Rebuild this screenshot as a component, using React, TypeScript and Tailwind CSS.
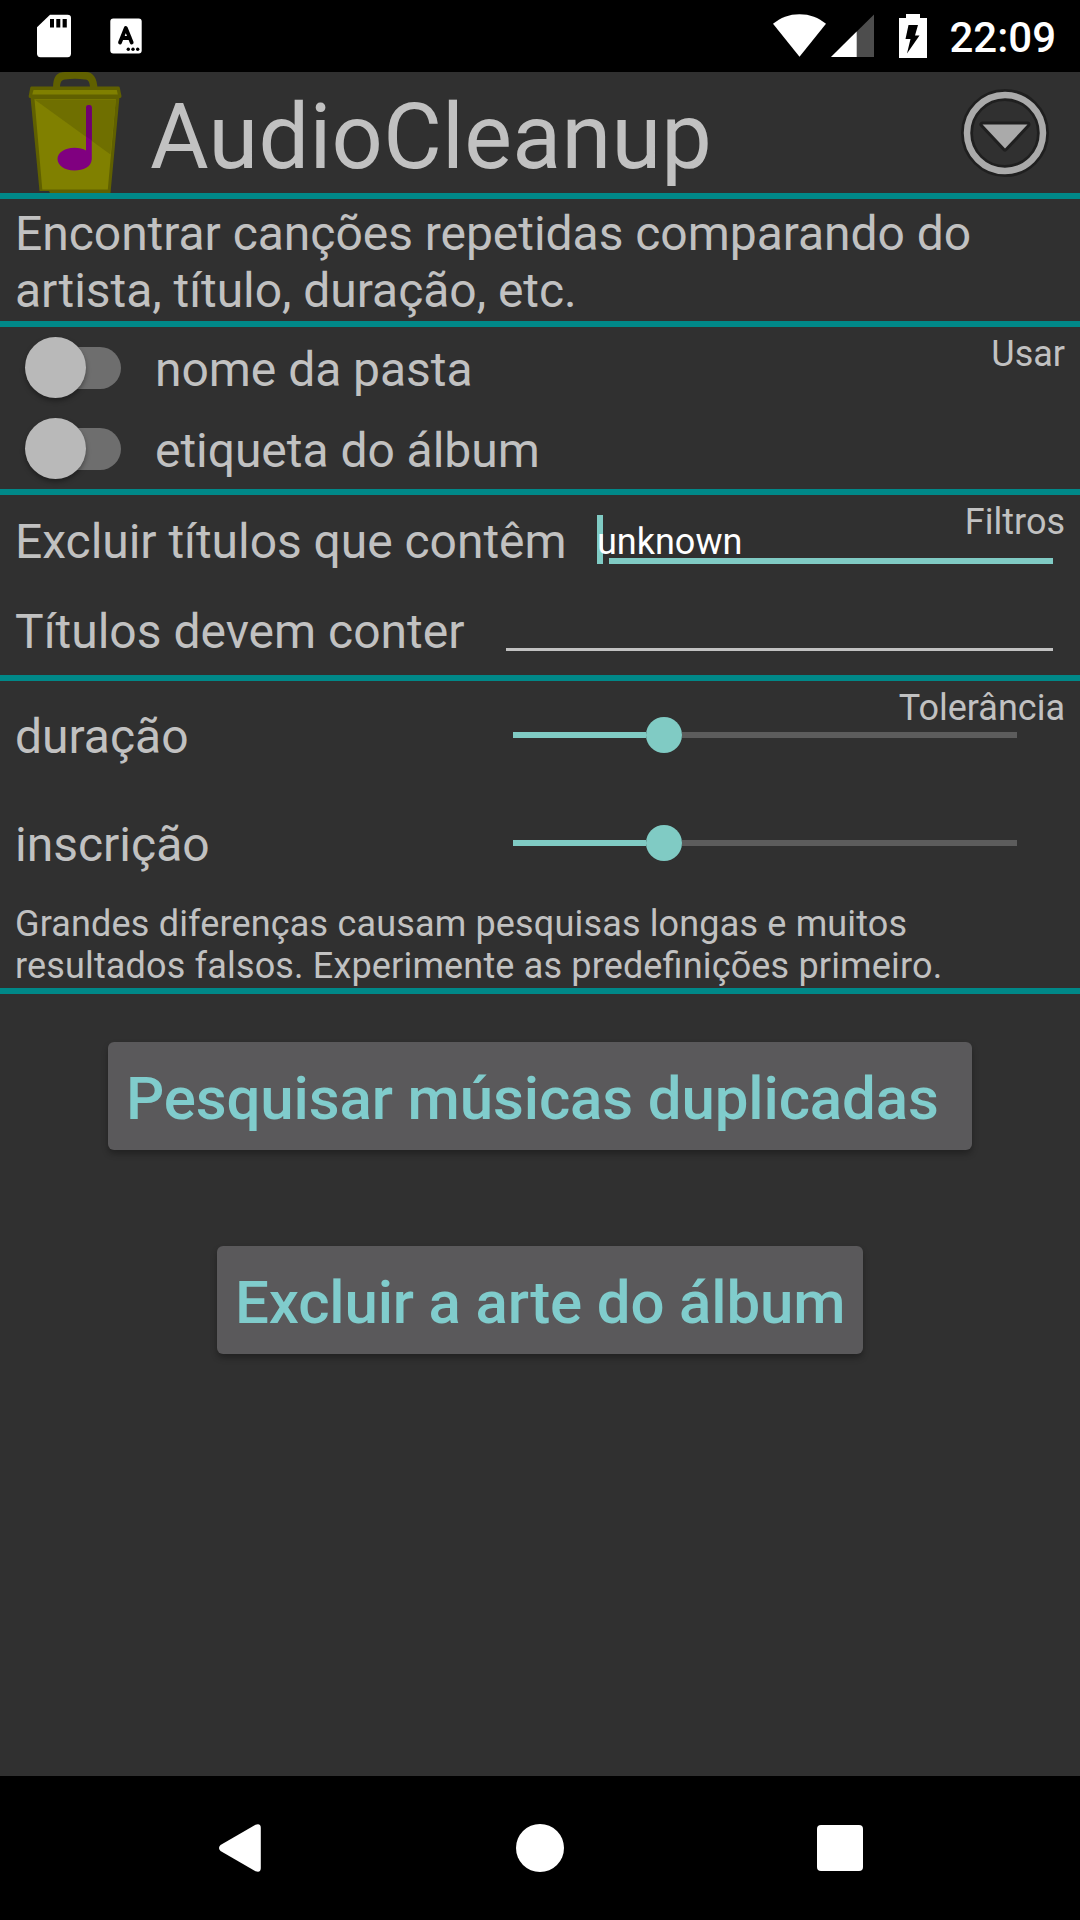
import type { ReactNode } from "react";

function StatusBar() {
  return (
    <div className="flex h-[72px] items-center justify-between bg-black pl-[37px] pr-[24px] text-white">
      <div className="flex items-center gap-[39px]">
        <svg className="h-[44px] w-[34px]" viewBox="0 0 34 44">
          <path d="M13 0.700H30.500Q34 0.700 34 4V39.500Q34 43.200 30.500 43.200H3.500Q0 43.200 0 39.500V13.300Z" fill="#fff" />
          <path d="M13 5h4v8.500h-4zM19.300 5h4v8.500h-4zM25.600 5h4.200v8.500h-4.200z" fill="#000" />
        </svg>
        <svg className="h-[36px] w-[32px]" viewBox="0 0 32 36">
          <rect x="0.300" y="0.500" width="31.400" height="35" rx="3" fill="#fff" />
          <path d="M10 24.500L15.800 10L21.700 24.500M12 20H20" fill="none" stroke="#000" strokeWidth="3.800" strokeLinecap="round" strokeLinejoin="round" />
          <circle cx="18.300" cy="31.300" r="1.700" fill="#000" />
          <circle cx="23" cy="31.300" r="1.700" fill="#000" />
          <circle cx="27.700" cy="31.300" r="1.700" fill="#000" />
        </svg>
      </div>
      <div className="flex items-center">
        <svg className="h-[44px] w-[53px]" viewBox="0 0 53 44">
          <path d="M26.500 42.700L0 9.800C7.500 3.500 16 0.200 26.500 0.200S45.500 3.500 53 9.800Z" fill="#fff" />
        </svg>
        <svg className="ml-[5px] h-[44px] w-[43px]" viewBox="0 0 43 44">
          <path d="M43 0.500V43H0Z" fill="#4d4d4d" />
          <path d="M25.700 17.600V43H0Z" fill="#fff" />
        </svg>
        <svg className="ml-[25px] h-[44px] w-[28px]" viewBox="0 0 28 44">
          <path d="M7 0H21V4H28V44H0V4H7Z" fill="#fff" />
          <path d="M9.500 11H19L16 21.500H20.500L8 39.500L11.500 25H6.500Z" fill="#000" />
        </svg>
        <span className="ml-[22px] pt-[4px] text-[42px] leading-[50px] font-medium">22:09</span>
      </div>
    </div>
  );
}

function TrashIcon() {
  return (
    <svg className="h-[121px] w-[100px]" viewBox="24 72 100 121">
      <path d="M53 88C53 76 57 72 65 72H86C93 72 97 78 97.500 88H90C90 82 88 79.500 85 79.500Q75 78 65 79.500C61 80 60 83 60 88Z" fill="#606000" />
      <path d="M30.500 97L39.500 191H49L50 193H110.500L119.500 97Z" fill="#606000" />
      <path d="M34.500 99L42.300 189.500H107.800L115.800 99Z" fill="#808000" />
      <path d="M34.500 99.500H115.800L110.500 154.500Z" fill="#6f6f00" />
      <path d="M31.500 86.500H118.500Q119.500 86.500 119.700 87.500L121.500 96Q121.500 98 120 98H30Q28.500 98 28.700 96L30.300 87.500Q30.500 86.500 31.500 86.500Z" fill="#606000" />
      <path d="M33.500 90H116.800L117.800 94.500H32.300Z" fill="#808000" />
      <path d="M86 108Q86 105 88.900 105T91.800 108V159C91.500 167 83 170.500 74.500 170.500C64 170.500 57.500 165 57.500 159S64 147.700 74.500 147.700Q81.500 147.700 86 150.500Z" fill="#800080" />
      <path d="M86 108Q86 105 88.900 105T91.800 108V140.500L86 136.500Z" fill="#700070" />
    </svg>
  );
}

function MenuIcon() {
  return (
    <svg className="h-[92px] w-[92px]" viewBox="-46 -46 92 92">
      <circle r="38" fill="none" stroke="#1f1f1f" strokeWidth="12" />
      <circle r="38" fill="none" stroke="#aaa" strokeWidth="6.500" />
      <path d="M-22.500 -8.500H22.500L0 15.500Z" fill="#aaa" stroke="#1f1f1f" strokeWidth="6" strokeLinejoin="round" paintOrder="stroke" />
    </svg>
  );
}

function SectionLabel({ children }: { children: ReactNode }) {
  return <span className="absolute top-[6px] right-[15px] text-[36px] leading-[42px]">{children}</span>;
}

function SwitchRow({ label }: { label: string }) {
  return (
    <label className="flex h-[81px] items-center pl-[25px]">
      <span className="flex h-[42px] w-[96px] items-center rounded-full bg-[#6e6e6e] bg-clip-content pl-2">
        <span className="-ml-2 h-[61px] w-[61px] shrink-0 rounded-full bg-[#b9b9b9] shadow-[0_3px_5px_rgba(0,0,0,0.35)]" />
      </span>
      <span className="pt-[5px] pl-[34px] text-[48px] leading-[56px] tracking-[-0.04px]">{label}</span>
    </label>
  );
}

function SliderRow({ label }: { label: string }) {
  return (
    <div className="flex h-[108px] items-center">
      <span className="w-[513px] pt-[3px] pl-[15px] text-[48px] leading-[56px]">{label}</span>
      <div className="flex w-[504px] items-center">
        <div className="h-[6px] w-[133px] bg-[#80cbc4]" />
        <div className="h-[36px] w-[36px] rounded-full bg-[#80cbc4]" />
        <div className="h-[6px] flex-1 bg-[#5c5c5c]" />
      </div>
    </div>
  );
}

function NavigationBar() {
  return (
    <div className="flex h-[144px] items-center bg-black pl-[219px]">
      <svg className="h-[48px] w-[42px]" viewBox="0 0 42 48">
        <path d="M1.500 21L36.500 0.800Q41.800 -1 41.800 4V44Q41.800 49 36.500 47.200L1.500 27Q-1.500 24 1.500 21Z" fill="#fff" />
      </svg>
      <div className="ml-[255px] h-[48px] w-[48px] rounded-full bg-white" />
      <div className="ml-[253px] h-[46px] w-[46px] rounded-[4px] bg-white" />
    </div>
  );
}

export default function App() {
  return (
    <div className="flex h-[1920px] w-[1080px] flex-col overflow-hidden bg-[#303030] font-['Roboto',sans-serif] text-[#c1c1c1]">
      <StatusBar />

      {/* Header */}
      <div className="flex h-[127px] items-center border-b-[6px] border-[#008888] pl-[24px] pr-[29px]">
        <TrashIcon />
        <h1 className="flex-1 pt-[10px] pl-[26px] text-[90px] leading-[106px] tracking-[0.28px]">AudioCleanup</h1>
        <MenuIcon />
      </div>

      <p className="h-[128px] border-b-[6px] border-[#008888] pt-[6px] pl-[15px] text-[48px] leading-[57px] tracking-[-0.04px]">
        Encontrar canções repetidas comparando do
        <br />
        artista, título, duração, etc.
      </p>

      {/* Fields to compare */}
      <section className="relative h-[168px] border-b-[6px] border-[#008888]">
        <SectionLabel>Usar</SectionLabel>
        <SwitchRow label="nome da pasta" />
        <SwitchRow label="etiqueta do álbum" />
      </section>

      {/* Filters */}
      <section className="relative h-[186px] border-b-[6px] border-[#008888]">
        <SectionLabel>Filtros</SectionLabel>
        <div className="flex h-[90px]">
          <span className="w-[597px] shrink-0 pt-[19px] pl-[15px] text-[48px] leading-[56px] tracking-[-0.04px]">Excluir títulos que contêm</span>
          <div className="relative w-[456px] pt-[20px]">
            <div className="absolute top-[20px] left-0 h-[49px] w-[6px] bg-[#80cbc4]" />
            <input
              className="relative block h-[43px] w-full bg-transparent p-0 pt-[10px] text-[36px] leading-[33px] text-white outline-none"
              defaultValue="unknown"
            />
            <div className="ml-[12px] h-[6px] bg-[#80cbc4]" />
          </div>
        </div>
        <div className="flex h-[90px]">
          <span className="w-[494px] shrink-0 pt-[19px] pl-[15px] text-[48px] leading-[56px]">Títulos devem conter</span>
          <div className="w-[559px] pt-[20px]">
            <input className="block h-[43px] w-full bg-transparent p-0 text-[36px] leading-[42px] text-white outline-none" />
            <div className="ml-[12px] h-[3px] bg-[#c1c1c1]" />
          </div>
        </div>
      </section>

      {/* Tolerance */}
      <section className="relative h-[313px] border-b-[6px] border-[#008888]">
        <SectionLabel>Tolerância</SectionLabel>
        <SliderRow label="duração" />
        <SliderRow label="inscrição" />
        <p className="pt-[6px] pl-[15px] text-[36px] leading-[42px] tracking-[0.16px] [font-feature-settings:'liga'_1]">
          Grandes diferenças causam pesquisas longas e muitos
          <br />
          resultados falsos. Experimente as predefinições primeiro.
        </p>
      </section>

      {/* Actions */}
      <div className="flex flex-1 flex-col items-center gap-[96px] pt-[48px]">
        <button className="h-[108px] w-[864px] rounded-[6px] bg-[#5a595b] pt-[6px] pl-[18px] text-left text-[60px] leading-[70px] font-medium tracking-[-0.13px] text-[#80cccc] shadow-[0_4px_6px_rgba(0,0,0,0.3)]">
          Pesquisar músicas duplicadas
        </button>
        <button className="h-[108px] w-[646px] rounded-[6px] bg-[#5a595b] pt-[6px] pl-[18px] text-left text-[60px] leading-[70px] font-medium tracking-[-0.16px] text-[#80cccc] shadow-[0_4px_6px_rgba(0,0,0,0.3)]">
          Excluir a arte do álbum
        </button>
      </div>

      <NavigationBar />
    </div>
  );
}
